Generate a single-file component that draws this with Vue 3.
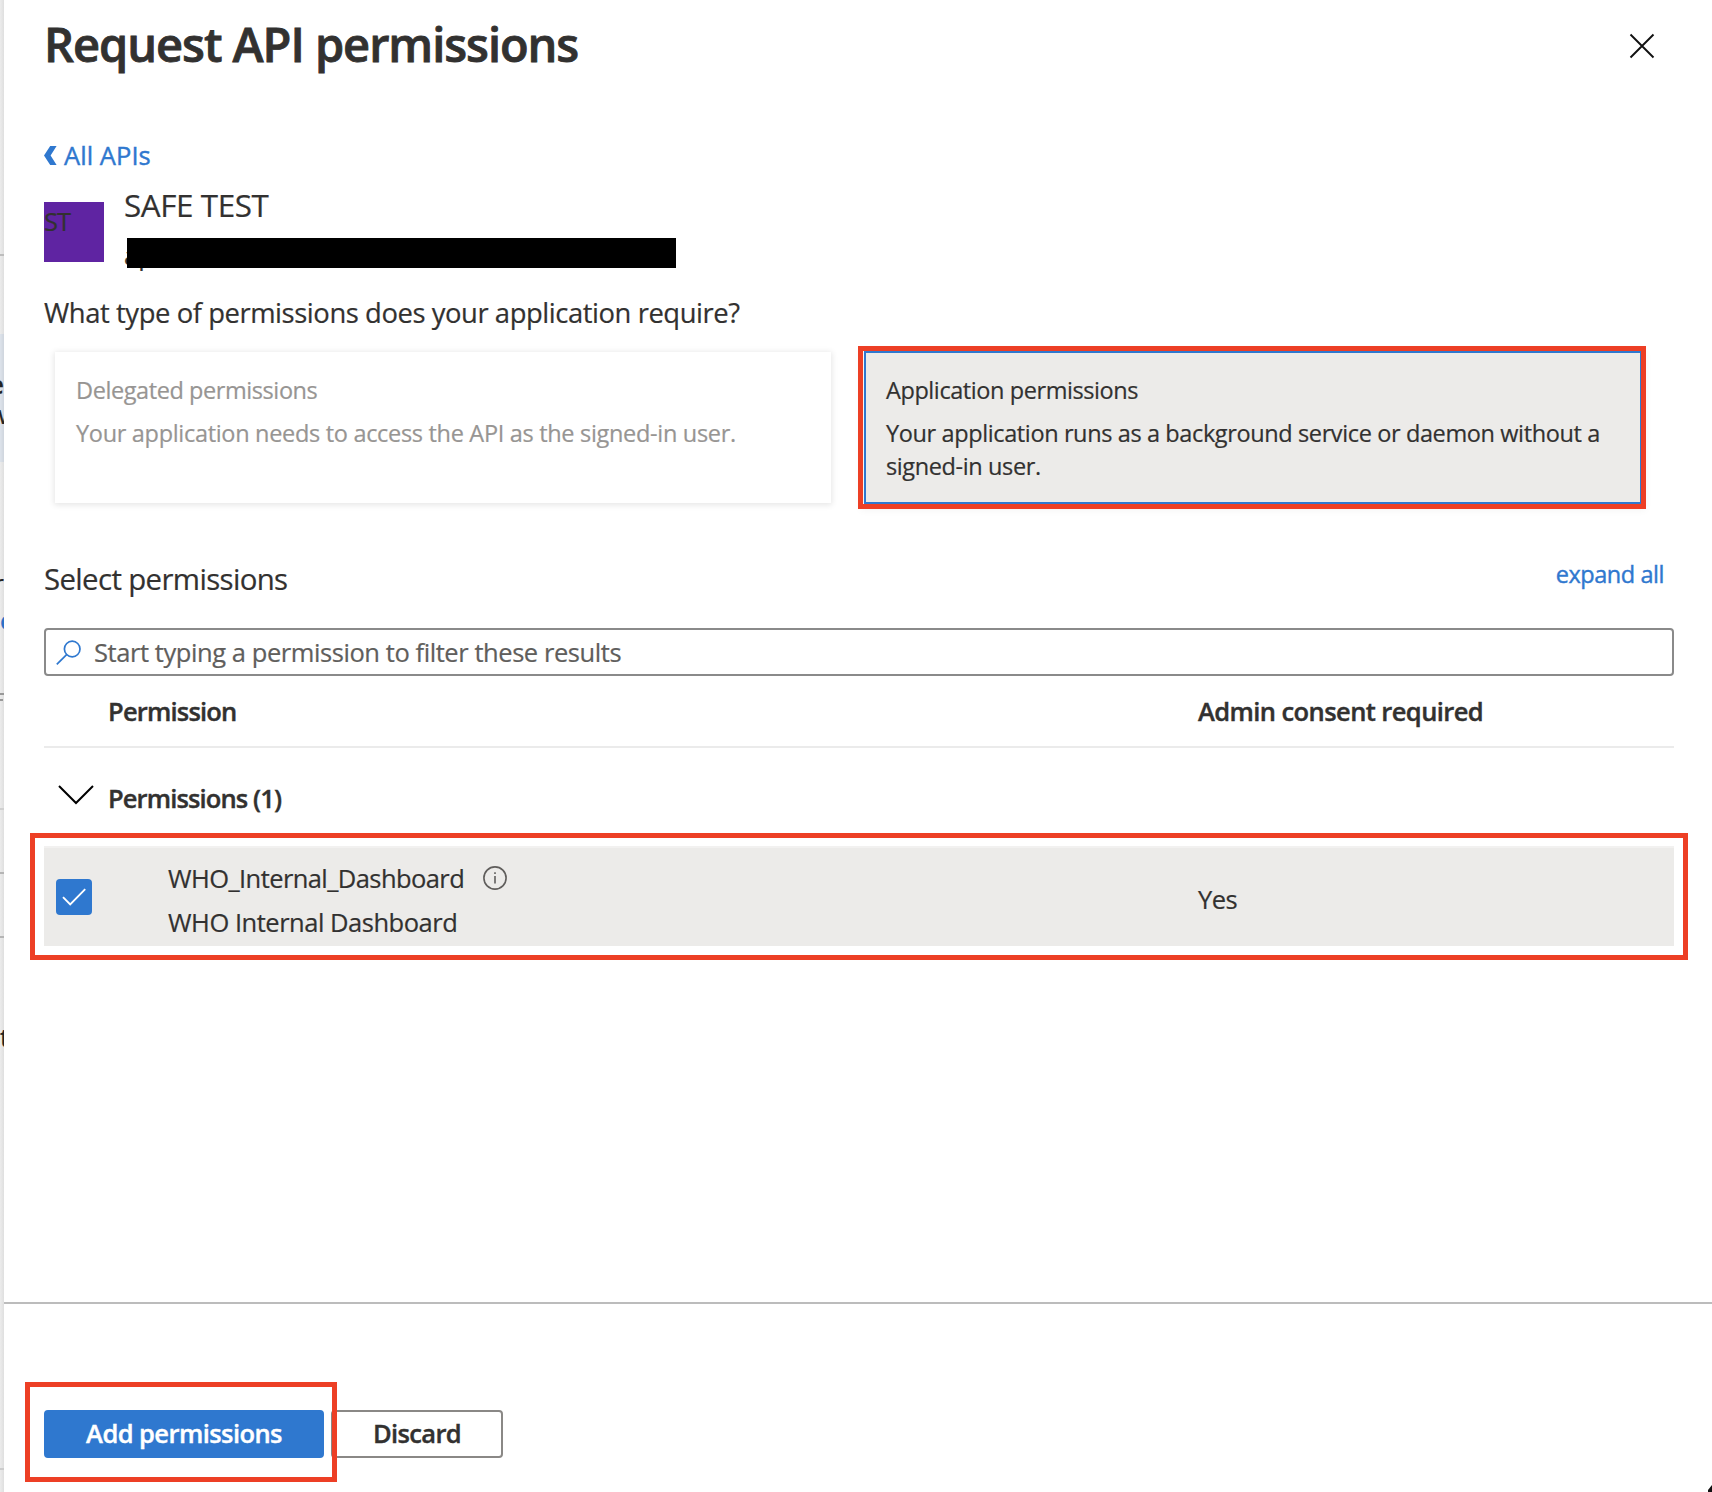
<script setup>
const cards = [
  {
    key: 'delegated',
    title: 'Delegated permissions',
    text: 'Your application needs to access the API as the signed-in user.',
  },
  {
    key: 'application',
    title: 'Application permissions',
    text: 'Your application runs as a background service or daemon without a signed-in user.',
  },
]
const rows = [
  { name: 'WHO_Internal_Dashboard', description: 'WHO Internal Dashboard', consent: 'Yes' },
]
</script>

<template>
  <div class="screen">
    <!-- Page underneath, of which only a sliver shows left of the panel -->
    <aside class="under">
      <i class="rule r1"></i>
      <i class="active"></i>
      <span class="frag f1">e</span>
      <span class="frag f2">w</span>
      <span class="frag f3">r</span>
      <span class="frag f4">e</span>
      <i class="rule g1"></i>
      <i class="rule g2"></i>
      <i class="rule r2"></i>
      <i class="rule r3"></i>
      <i class="rule r4"></i>
      <span class="frag f5">t</span>
      <i class="rule r5"></i>
    </aside>

    <main class="panel">
      <div class="body">
        <header class="head">
          <h1>Request API permissions</h1>
          <svg class="close" width="26" height="26" viewBox="0 0 26 26">
            <path d="M1.5 1.5 24.5 24.5M24.5 1.5 1.5 24.5" />
          </svg>
        </header>

        <a class="back">
          <svg width="13" height="19" viewBox="0 0 13 19">
            <path d="M6.2 0H12.6L6.6 9.5 12.6 19H6.2L0 9.5Z" />
          </svg>
          <span>All APIs</span>
        </a>

        <section class="api">
          <div class="tile">ST</div>
          <div class="api-text">
            <div class="api-name">SAFE TEST</div>
            <div class="api-uri">ap<i class="redaction"></i></div>
          </div>
        </section>

        <p class="question">What type of permissions does your application require?</p>

        <section class="cards">
          <div v-for="c in cards" :key="c.key" class="card" :class="c.key">
            <div class="card-title">{{ c.title }}</div>
            <div class="card-text">{{ c.text }}</div>
            <i v-if="c.key === 'application'" class="mark mark-card"></i>
          </div>
        </section>

        <div class="select">
          <h2>Select permissions</h2>
          <a>expand all</a>
        </div>

        <div class="search">
          <svg width="26" height="26" viewBox="0 0 26 26">
            <circle cx="16.2" cy="9" r="7.8" />
            <path d="M10.6 14.6 0.8 24.4" />
          </svg>
          <span>Start typing a permission to filter these results</span>
        </div>

        <div class="columns">
          <span class="c-name">Permission</span>
          <span class="c-consent">Admin consent required</span>
        </div>

        <div class="group">
          <svg width="36" height="20" viewBox="0 0 36 20">
            <path d="M1 1 18 18 35 1" />
          </svg>
          <span>Permissions (1)</span>
        </div>

        <div v-for="r in rows" :key="r.name" class="row">
          <span class="check">
            <svg width="24" height="18" viewBox="0 0 24 18">
              <path d="M1 9.2 8.2 16.4 23.2 1.2" />
            </svg>
          </span>
          <div class="names">
            <div class="name">
              <span>{{ r.name }}</span>
              <svg width="24" height="24" viewBox="0 0 24 24">
                <circle cx="12" cy="12" r="11.1" />
                <path d="M12 10V17.4" />
                <path d="M12 6.2V8" />
              </svg>
            </div>
            <div class="desc">{{ r.description }}</div>
          </div>
          <span class="consent">{{ r.consent }}</span>
          <i class="mark mark-row"></i>
        </div>
      </div>

      <footer class="foot">
        <button class="primary">Add permissions</button>
        <button class="secondary">Discard</button>
        <i class="mark mark-foot"></i>
        <svg class="corner" width="4" height="7" viewBox="0 0 4 7"><path d="M4 0V7H0V5Z" /></svg>
      </footer>
    </main>
  </div>
</template>

<style>
body {
  margin: 0;
}
</style>

<style scoped>
.screen {
  display: flex;
  width: 1712px;
  height: 1492px;
  overflow: hidden;
  background: #fff;
  color: #323130;
  font-family: "Open Sans", "Noto Sans", sans-serif;
  font-size: 25.5px;
  line-height: 36px;
  white-space: nowrap;
  -webkit-text-stroke: 0.2px currentColor;
}

/* Underlying page */
.under {
  position: relative;
  flex: none;
  width: 4px;
  overflow: hidden;
  background: linear-gradient(90deg, #ececec, #dfdfdf);
}
.under i,
.frag {
  position: absolute;
}
.rule {
  left: 0;
  width: 4px;
  height: 2px;
  background: #b5b5b5;
}
.r1 { top: 254px; background: #bdbdbd; }
.g1 { top: 693px; background: #999; }
.g2 { top: 699px; width: 3px; background: #999; }
.r2 { top: 808px; background: #d0d0d0; }
.r3 { top: 872px; }
.r4 { top: 936px; }
.r5 { top: 1468px; background: #ccc; }
.active {
  left: 0;
  top: 334px;
  width: 4px;
  height: 128px;
  background: linear-gradient(90deg, #dde3eb, #cfd5dd);
}
.frag { color: #222; }
.f1 { right: 0; top: 366px; font-weight: 600; }
.f2 { left: -2px; top: 396px; }
.f3 { right: 0; top: 565px; }
.f4 { left: 0; top: 602px; color: #2b72c8; font-weight: 600; }
.f5 { left: 0; top: 1019px; }

.panel {
  display: flex;
  flex: 1;
  flex-direction: column;
  min-width: 0;
  background: #fff;
}
.body {
  box-sizing: border-box;
  height: 1302px;
  padding: 14px 38px 0 40px;
}

.head {
  display: flex;
  justify-content: space-between;
  height: 123px;
}
h1 {
  margin: 0;
  font-size: 47px;
  font-weight: 600;
  line-height: 60px;
  letter-spacing: -1.05px;
  -webkit-text-stroke-width: 0.8px;
}
.close {
  margin: 19px 19px 0 0;
  fill: none;
  stroke: #111;
  stroke-width: 1.9;
}

.back {
  display: flex;
  align-items: center;
  gap: 7px;
  height: 36px;
  color: #2f78cf;
  letter-spacing: 0.05px;
  -webkit-text-stroke-width: 0.4px;
}
.back svg {
  fill: #2f78cf;
}

.api {
  display: flex;
  gap: 20px;
  margin-top: 10px;
  height: 90px;
}
.tile {
  width: 60px;
  height: 60px;
  margin-top: 19px;
  background: #5f24a2;
  line-height: 39px;
  letter-spacing: -0.9px;
}
.api-name {
  font-size: 31.4px;
  line-height: 44px;
  letter-spacing: -0.4px;
}
.api-uri {
  position: relative;
  margin-top: 10px;
}
.redaction {
  position: absolute;
  left: 3px;
  top: 1px;
  width: 549px;
  height: 30px;
  background: #000;
}

.question {
  margin: 20px 0 0;
  font-size: 27.4px;
  line-height: 40px;
  letter-spacing: -0.43px;
}

.cards {
  display: flex;
  gap: 32px;
  margin: 18px 0 0 10px;
}
.card {
  position: relative;
  box-sizing: border-box;
  width: 778px;
  height: 153px;
  font-size: 23.5px;
  line-height: 33px;
  white-space: normal;
}
.delegated {
  width: 776px;
  height: 151px;
  margin: 1px 1px 0;
  padding: 22px 21px 0;
  background: #fff;
  color: #979593;
  box-shadow: 0 1px 6px 1px rgba(0, 0, 0, 0.1);
}
.application {
  padding: 21px 20px 0;
  border: 2px solid #2f78cf;
  background: #ecebe9;
  box-shadow: 0 3px 8px 3px rgba(0, 0, 0, 0.05);
}
.card-title {
  margin-bottom: 10px;
  letter-spacing: -0.42px;
}
.card-text {
  letter-spacing: -0.38px;
}
.delegated .card-text {
  letter-spacing: -0.31px;
}

/* Red annotation frames */
.mark {
  position: absolute;
  border: 5px solid #ed3f25;
  pointer-events: none;
}
.mark-card {
  inset: -7px -6px -7px -8px;
}

.select {
  display: flex;
  justify-content: space-between;
  margin-top: 54px;
  padding-right: 10px;
  height: 70px;
}
h2 {
  margin: 0;
  font-size: 29.4px;
  font-weight: 400;
  line-height: 42px;
  letter-spacing: -0.64px;
}
.select a {
  color: #2f78cf;
  font-size: 23.5px;
  line-height: 33px;
  letter-spacing: -0.44px;
  -webkit-text-stroke-width: 0.4px;
}

.search {
  display: flex;
  align-items: center;
  box-sizing: border-box;
  height: 48px;
  padding: 0 0 1px 10px;
  border: 2px solid #8a8a8a;
  border-radius: 4px;
  color: #605e5c;
  letter-spacing: -0.43px;
}
.search svg {
  margin: 2px 12px 0 0;
  fill: none;
  stroke: #2f78cf;
  stroke-width: 1.7;
}

.columns {
  display: flex;
  box-sizing: border-box;
  height: 72px;
  padding: 17px 0 0 64px;
  border-bottom: 2px solid #ebebeb;
  font-weight: 600;
  -webkit-text-stroke-width: 0.4px;
}
.c-name {
  width: 1090px;
  letter-spacing: -0.8px;
}
.c-consent {
  letter-spacing: -0.58px;
}

.group {
  display: flex;
  box-sizing: border-box;
  height: 98px;
  padding: 32px 0 0 14px;
  font-weight: 600;
  letter-spacing: -0.88px;
  -webkit-text-stroke-width: 0.4px;
}
.group svg {
  margin: 5px 14px 0 0;
  fill: none;
  stroke: #000;
  stroke-width: 2;
}

.row {
  position: relative;
  display: flex;
  align-items: center;
  box-sizing: border-box;
  height: 100px;
  padding-left: 12px;
  border-top: 2px solid #f2f1f0;
  background: #ecebe9;
}
.check {
  display: flex;
  align-items: center;
  justify-content: center;
  width: 36px;
  height: 36px;
  border-radius: 4px;
  background: #2f78cf;
}
.check svg {
  fill: none;
  stroke: #fff;
  stroke-width: 1.9;
}
.names {
  width: 1030px;
  margin-left: 76px;
  padding-top: 6px;
}
.name {
  display: flex;
  align-items: center;
  margin-bottom: 8px;
  letter-spacing: -0.58px;
}
.name svg {
  margin-left: 19px;
  fill: none;
  stroke: #605e5c;
  stroke-width: 1.6;
}
.desc {
  letter-spacing: -0.48px;
}
.consent {
  padding-top: 3px;
  letter-spacing: -0.6px;
}
.mark-row {
  inset: -15px -14px -14px -14px;
}

.foot {
  position: relative;
  display: flex;
  gap: 7px;
  flex: 1;
  padding: 106px 0 0 40px;
  border-top: 2px solid #bcbcbc;
}
button {
  box-sizing: border-box;
  height: 48px;
  margin: 0;
  padding: 0 0 2px;
  border: 2px solid #8a8886;
  border-radius: 4px;
  background: #fff;
  color: #323130;
  font: 600 25.5px/36px "Open Sans", "Noto Sans", sans-serif;
  letter-spacing: -0.65px;
  -webkit-text-stroke: 0.4px currentColor;
}
.primary {
  width: 280px;
  border-color: #2f78cf;
  background: #2f78cf;
  color: #fff;
  letter-spacing: -0.57px;
}
.secondary {
  width: 172px;
}
.mark-foot {
  left: 21px;
  top: 78px;
  width: 302px;
  height: 90px;
}
.corner {
  position: absolute;
  right: 0;
  bottom: 0;
  fill: #111;
}
</style>
